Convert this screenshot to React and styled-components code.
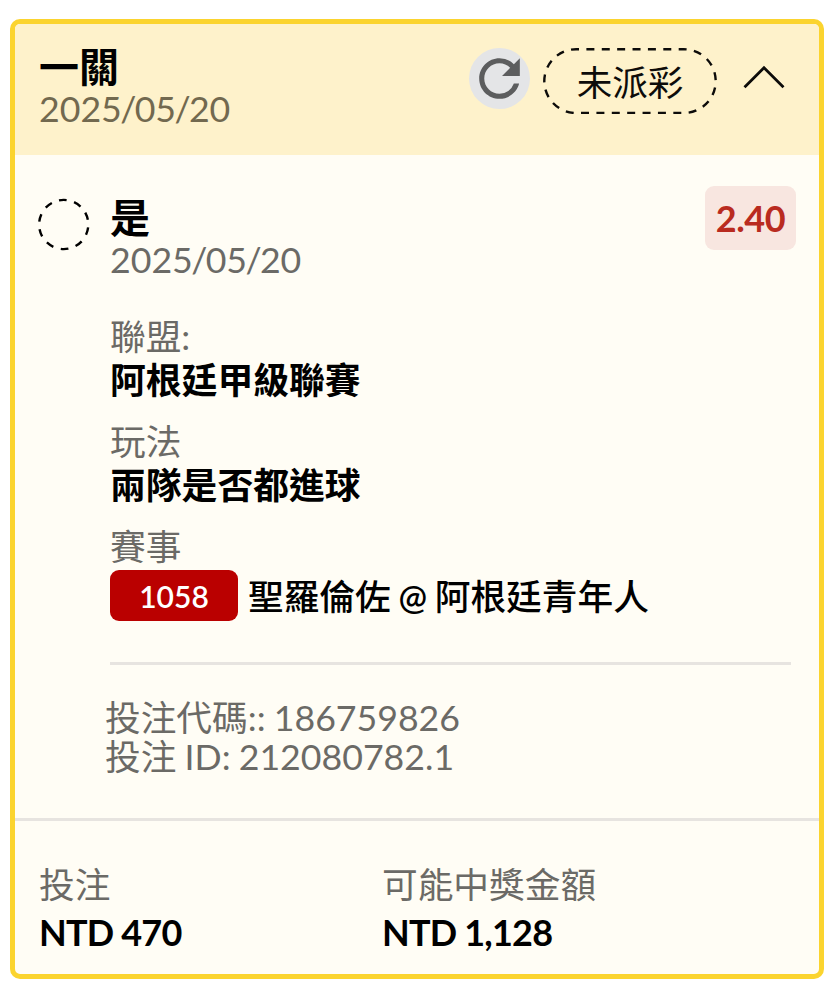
import React, {useState} from 'react';
import {createGlobalStyle, styled} from 'styled-components';
import {MdRefresh} from 'react-icons/md';

const GlobalStyle = createGlobalStyle`
  body {
    margin: 0;
    background-color: #ffffff;
    font-family: Lato, "Noto Sans CJK TC", sans-serif;
  }
`

const PageStyled = styled.main`
  box-sizing: border-box;
  height: 1000px;
  padding: 19px 10px 21px;
`

const CardStyled = styled.article`
  box-sizing: border-box;
  height: 960px;
  border: 5px solid #fbd42f;
  border-radius: 10px;
  background-color: #fffdf5;
  overflow: hidden;
  display: flex;
  flex-direction: column;
`

const HeaderStyled = styled.header`
  box-sizing: border-box;
  flex: none;
  height: 131px;
  padding: 21px 34px 0 24px;
  display: flex;
  justify-content: space-between;
  background-color: #fef2cb;
`

const TitleStyled = styled.h2`
  margin: 0;
  font-size: 40px;
  line-height: 44px;
  font-weight: 700;
  color: #000000;
`

const DateStyled = styled.div`
  font-size: 35.7px;
  line-height: 40px;
  color: ${props => props.$onHeader ? '#72694f' : '#6b6a66'};
`

const SlashStyled = styled.span`
  margin: 0 -1.65px;
`

const ActionsStyled = styled.div`
  display: flex;
  align-items: flex-start;
  padding-top: 3px;
`

const RefreshButtonStyled = styled.button`
  width: 61px;
  height: 61px;
  padding: 0;
  border: none;
  border-radius: 50%;
  background-color: #e4e5e7;
  color: #5c5d5e;
  display: flex;
  cursor: pointer;
`

const StatusStyled = styled.div`
  position: relative;
  box-sizing: border-box;
  width: 174px;
  height: 66px;
  margin-left: 13px;
  padding-top: 1px;
  text-align: center;
  font-size: 35.6px;
  line-height: 67px;
  color: #0d0c0a;
`

const StatusOutlineStyled = styled.svg`
  position: absolute;
  inset: 0;
`

const ToggleStyled = styled.button`
  width: 42px;
  height: 26px;
  margin: 17px 0 0 26px;
  padding: 0;
  border: none;
  background: none;
  display: flex;
  cursor: pointer;
`

const SelectionStyled = styled.section`
  box-sizing: border-box;
  flex: none;
  height: 666px;
  padding: 31px 23px 0;
  display: grid;
  grid-template-columns: 52px 1fr;
  column-gap: 20px;
  border-bottom: 3px solid #e7e4e0;
`

const PendingMarkStyled = styled.svg`
  margin-top: 12px;
`

const SelectionHeadStyled = styled.div`
  height: 129px;
  display: flex;
  justify-content: space-between;
  align-items: flex-start;
`

const SelectionTitleStyled = styled.div`
  padding: 10px 0 0;
`

const OddsStyled = styled.div`
  width: 91px;
  height: 64px;
  border-radius: 9px;
  background-color: #f8e6e0;
  color: #b92b20;
  font-size: 36px;
  font-weight: 700;
  letter-spacing: -0.4px;
  line-height: 65px;
  text-align: center;
`

const FactsStyled = styled.dl`
  margin: 0;
  display: flex;
  flex-direction: column;
  gap: 17px;
`

const LabelStyled = styled.dt`
  font-size: 35.7px;
  line-height: 43px;
  color: #6b6a66;
`

const ValueStyled = styled.dd`
  margin: 0;
  font-size: 35.8px;
  line-height: 45px;
  font-weight: 700;
  color: #000000;
`

const MatchStyled = styled(ValueStyled)`
  display: flex;
  gap: 10px;
  margin-top: 2px;
  font-size: 35.7px;
  white-space: nowrap;
`

const MatchNumberStyled = styled.span`
  width: 128px;
  height: 51px;
  border-radius: 9px;
  background-color: #ba0000;
  color: #ffffff;
  font-size: 30px;
  font-weight: 600;
  line-height: 53px;
  text-align: center;
`

const TeamsStyled = styled.span`
  height: 51px;
  font-weight: 500;
  line-height: 54px;
`

const AtStyled = styled.span`
  margin: 0 -1.3px;
  font-size: 34px;
  font-weight: 600;
`

const CodesStyled = styled.div`
  margin: 41px 5px 0 0;
  padding-top: 34px;
  border-top: 3px solid #e7e4e0;
`

const CodeStyled = styled.div`
  margin-left: -5px;
  font-size: 35.7px;
  line-height: 38.5px;
  word-spacing: -1px;
  color: #6b6a66;
`

const FooterStyled = styled.footer`
  padding: 42px 24px 0;
  display: grid;
  grid-template-columns: 343px 1fr;
`

const AmountStyled = styled.div`
  font-size: 36px;
  line-height: 53px;
  font-weight: 700;
  letter-spacing: -0.8px;
  color: #000000;
`

const AmountLabelStyled = styled.div`
  font-size: 35.7px;
  line-height: 43px;
  color: #6b6a66;
`

const facts = [
    {label: '聯盟:', value: '阿根廷甲級聯賽'},
    {label: '玩法', value: '兩隊是否都進球'},
]

const amounts = [
    {label: '投注', value: 'NTD 470'},
    {label: '可能中獎金額', value: 'NTD 1,128'},
]

function BetDate({onHeader}) {
    return (
        <DateStyled $onHeader={onHeader}>
            2025<SlashStyled>/</SlashStyled>05<SlashStyled>/</SlashStyled>20
        </DateStyled>
    )
}

function Status({children}) {
    return (
        <StatusStyled>
            <StatusOutlineStyled width='174' height='66' fill='none' stroke='#0d0c0a' strokeWidth='2.4'>
                <rect x='1.3' y='1.2' width='171.4' height='63.8' rx='31.9'
                      pathLength='416' strokeDasharray='8 7.407' strokeDashoffset='5.2'/>
            </StatusOutlineStyled>
            {children}
        </StatusStyled>
    )
}

function PendingMark() {
    return (
        <PendingMarkStyled width='52' height='54' fill='none' stroke='#000000' strokeWidth='2.4'>
            <circle cx='25.7' cy='26.5' r='24.6' pathLength='100'
                    strokeDasharray='5 5' transform='rotate(-101 25.7 26.5)'/>
        </PendingMarkStyled>
    )
}

export default function App() {
    const [open, setOpen] = useState(true)

    function handleOnToggle() {
        setOpen(open => !open)
    }

    return (
        <PageStyled>
            <GlobalStyle/>
            <CardStyled>
                <HeaderStyled>
                    <div>
                        <TitleStyled>一關</TitleStyled>
                        <BetDate onHeader/>
                    </div>
                    <ActionsStyled>
                        <RefreshButtonStyled type='button' aria-label='重新整理'>
                            <MdRefresh size={61}/>
                        </RefreshButtonStyled>
                        <Status>未派彩</Status>
                        <ToggleStyled type='button' aria-label='收合' onClick={handleOnToggle}>
                            <svg width='42' height='26' fill='none' stroke='#0d0c0a' strokeWidth='2.8'>
                                <path d={open ? 'M1.5 22.2 21 2.8 40.5 22.2' : 'M1.5 2.8 21 22.2 40.5 2.8'}/>
                            </svg>
                        </ToggleStyled>
                    </ActionsStyled>
                </HeaderStyled>
                {open && (
                    <SelectionStyled>
                        <PendingMark/>
                        <div>
                            <SelectionHeadStyled>
                                <SelectionTitleStyled>
                                    <TitleStyled>是</TitleStyled>
                                    <BetDate/>
                                </SelectionTitleStyled>
                                <OddsStyled>2.40</OddsStyled>
                            </SelectionHeadStyled>
                            <FactsStyled>
                                {facts.map(fact => (
                                    <div key={fact.label}>
                                        <LabelStyled>{fact.label}</LabelStyled>
                                        <ValueStyled>{fact.value}</ValueStyled>
                                    </div>
                                ))}
                                <div>
                                    <LabelStyled>賽事</LabelStyled>
                                    <MatchStyled>
                                        <MatchNumberStyled>1058</MatchNumberStyled>
                                        <TeamsStyled>聖羅倫佐 <AtStyled>@</AtStyled> 阿根廷青年人</TeamsStyled>
                                    </MatchStyled>
                                </div>
                            </FactsStyled>
                            <CodesStyled>
                                <CodeStyled>投注代碼:: 186759826</CodeStyled>
                                <CodeStyled>投注 ID: 212080782.1</CodeStyled>
                            </CodesStyled>
                        </div>
                    </SelectionStyled>
                )}
                <FooterStyled>
                    {amounts.map(amount => (
                        <div key={amount.label}>
                            <AmountLabelStyled>{amount.label}</AmountLabelStyled>
                            <AmountStyled>{amount.value}</AmountStyled>
                        </div>
                    ))}
                </FooterStyled>
            </CardStyled>
        </PageStyled>
    )
}
